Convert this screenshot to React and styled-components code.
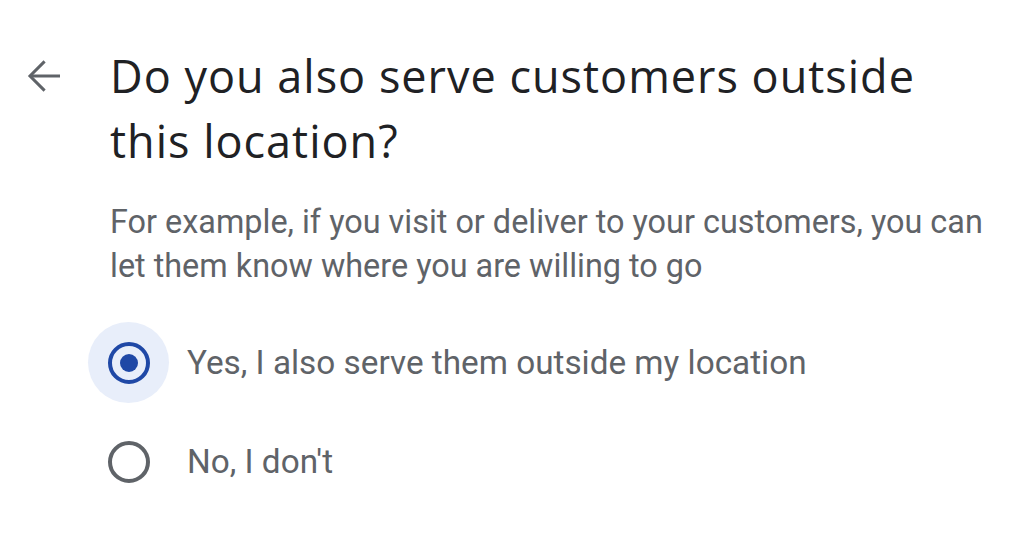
import React from 'react'
import styled, { createGlobalStyle } from 'styled-components'

const PageStyle = createGlobalStyle`
  html, body {
    margin: 0;
    padding: 0;
    background: #ffffff;
  }
  body {
    font-family: Roboto, 'Noto Sans', sans-serif;
  }
`

const Page = styled.div`
  width: 1024px;
  height: 550px;
  box-sizing: border-box;
  padding-top: 43px;
  display: grid;
  grid-template-columns: 110px 1fr;
  align-items: start;
`

const BackButton = styled.button`
  border: 0;
  background: none;
  padding: 0;
  margin: 9px 0 0 20px;
  width: 48px;
  height: 48px;
  display: flex;
  color: #5f6368;
  cursor: pointer;
`

const Content = styled.div`
  display: flex;
  flex-direction: column;
`

const Title = styled.h1`
  margin: 0;
  max-width: 860px;
  font-family: 'Open Sans', 'Noto Sans', sans-serif;
  font-weight: 400;
  font-size: 45px;
  line-height: 65px;
  letter-spacing: 1px;
  color: #202124;
`

const Description = styled.p`
  margin: 27px 0 0 0;
  max-width: 890px;
  font-size: 32.4px;
  line-height: 44px;
  color: #5f6368;
`

const Options = styled.div`
  display: flex;
  flex-direction: column;
  gap: 18px;
  margin: 34px 0 0 -22px;
`

const Option = styled.label`
  display: flex;
  align-items: center;
  gap: 18px;
  font-size: 33.3px;
  color: #5f6368;
  cursor: pointer;
`

const Halo = styled.span`
  flex: 0 0 81px;
  width: 81px;
  height: 81px;
  border-radius: 50%;
  display: flex;
  align-items: center;
  justify-content: center;
  background: ${(p) => (p.$checked ? '#e8eefa' : 'transparent')};
`

const Ring = styled.span`
  box-sizing: border-box;
  width: 42px;
  height: 42px;
  border-radius: 50%;
  border: 4px solid ${(p) => (p.$checked ? '#1f48a6' : '#5f6368')};
  display: flex;
  align-items: center;
  justify-content: center;
  &::after {
    content: '';
    display: ${(p) => (p.$checked ? 'block' : 'none')};
    width: 18px;
    height: 18px;
    border-radius: 50%;
    background: #1f48a6;
  }
`

const Radio = ({ checked, children }) => (
  <Option>
    <Halo $checked={checked}>
      <Ring $checked={checked} />
    </Halo>
    {children}
  </Option>
)

const App = () => (
  <>
    <PageStyle />
    <Page>
      <BackButton aria-label='Back'>
        <svg width='48' height='48' viewBox='0 0 24 24' fill='none' stroke='currentColor' strokeWidth='1.5'>
          <path d='M20 12H5' />
          <path d='M12.3 4.7L5 12l7.3 7.3' />
        </svg>
      </BackButton>
      <Content>
        <Title>Do you also serve customers outside this location?</Title>
        <Description>
          For example, if you visit or deliver to your customers, you can let them know where you are willing to go
        </Description>
        <Options>
          <Radio checked>Yes, I also serve them outside my location</Radio>
          <Radio>No, I don't</Radio>
        </Options>
      </Content>
    </Page>
  </>
)

export default App
